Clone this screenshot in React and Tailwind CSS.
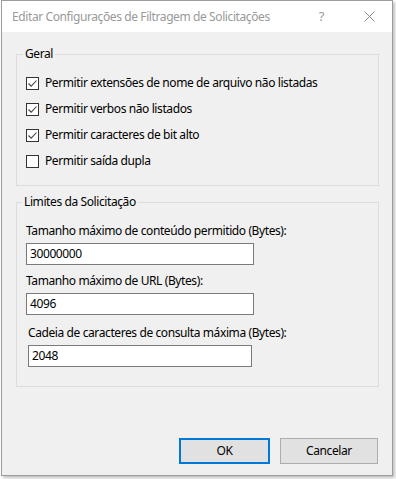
import React from "react";

const checks = [
  { label: "Permitir extensões de nome de arquivo não listadas", checked: true },
  { label: "Permitir verbos não listados", checked: true },
  { label: "Permitir caracteres de bit alto", checked: true },
  { label: "Permitir saída dupla", checked: false },
];

function Check({ checked }) {
  return (
    <span className="w-[13px] h-[13px] border border-[#333333] bg-white flex items-center justify-center shrink-0">
      {checked && (
        <svg width="11" height="11" viewBox="0 0 11 11">
          <path d="M1.5 5.5 L4.2 8.2 L9.5 2.5" fill="none" stroke="#444" strokeWidth="1.1" />
        </svg>
      )}
    </span>
  );
}

export default function App() {
  return (
    <div className="min-h-screen bg-white font-['Segoe_UI','Noto_Sans',sans-serif] text-[12px] tracking-[-0.4px] text-black">
      <div className="ml-[1px] w-[392px] h-[476px] border border-[#9c9c9c] flex flex-col shadow-[2px_2px_3px_rgba(0,0,0,0.25)]">
        {/* title bar */}
        <div className="h-[31px] bg-white flex items-center pl-[10px] text-[#999999] shrink-0">
          <span className="leading-[16px]">Editar Configurações de Filtragem de Solicitações</span>
          <span className="ml-auto mr-[40px] text-[13px]">?</span>
          <svg className="mr-[17px]" width="11" height="11" viewBox="0 0 11 11">
            <path d="M0.5 0.5 L10.5 10.5 M10.5 0.5 L0.5 10.5" stroke="#888" strokeWidth="1" />
          </svg>
        </div>

        {/* body */}
        <div className="flex-1 bg-[#f0f0f0] pl-[14px] pr-[13px] flex flex-col">
          <fieldset className="mt-[14px] h-[140px] border border-[#dcdcdc]">
            <legend className="ml-[6px] px-[2px] leading-[16px]">Geral</legend>
            <div className="pl-[9px] pt-[8px] flex flex-col">
              {checks.map((c, i) => (
                <div key={i} className="h-[26px] flex items-center gap-[6px]">
                  <Check checked={c.checked} />
                  <span className="leading-[16px]">{c.label}</span>
                </div>
              ))}
            </div>
          </fieldset>

          <fieldset className="mt-[8px] h-[193px] border border-[#dcdcdc]">
            <legend className="ml-[5px] px-[2px] leading-[16px]">Limites da Solicitação</legend>
            <div className="pl-[9px] pt-[13px] flex flex-col">
              <label className="leading-[16px]">Tamanho máximo de conteúdo permitido (Bytes):</label>
              <div className="mt-[4px] w-[228px] h-[22px] border border-[#7a7a7a] bg-white flex items-center pl-[3px]">30000000</div>
              <label className="mt-[8px] leading-[16px]">Tamanho máximo de URL (Bytes):</label>
              <div className="mt-[4px] w-[228px] h-[22px] border border-[#7a7a7a] bg-white flex items-center pl-[3px]">4096</div>
              <label className="mt-[10px] ml-[2px] leading-[16px]">Cadeia de caracteres de consulta máxima (Bytes):</label>
              <div className="mt-[4px] ml-[2px] w-[224px] h-[22px] border border-[#7a7a7a] bg-white flex items-center pl-[3px]">2048</div>
            </div>
          </fieldset>

          <div className="mt-auto mb-[11px] mr-[1px] flex justify-end gap-[10px]">
            <button className="w-[91px] h-[26px] bg-[#e1e1e1] border-2 border-[#0078d7]">OK</button>
            <button className="w-[98px] h-[26px] bg-[#e1e1e1] border border-[#adadad]">Cancelar</button>
          </div>
        </div>
      </div>
    </div>
  );
}
